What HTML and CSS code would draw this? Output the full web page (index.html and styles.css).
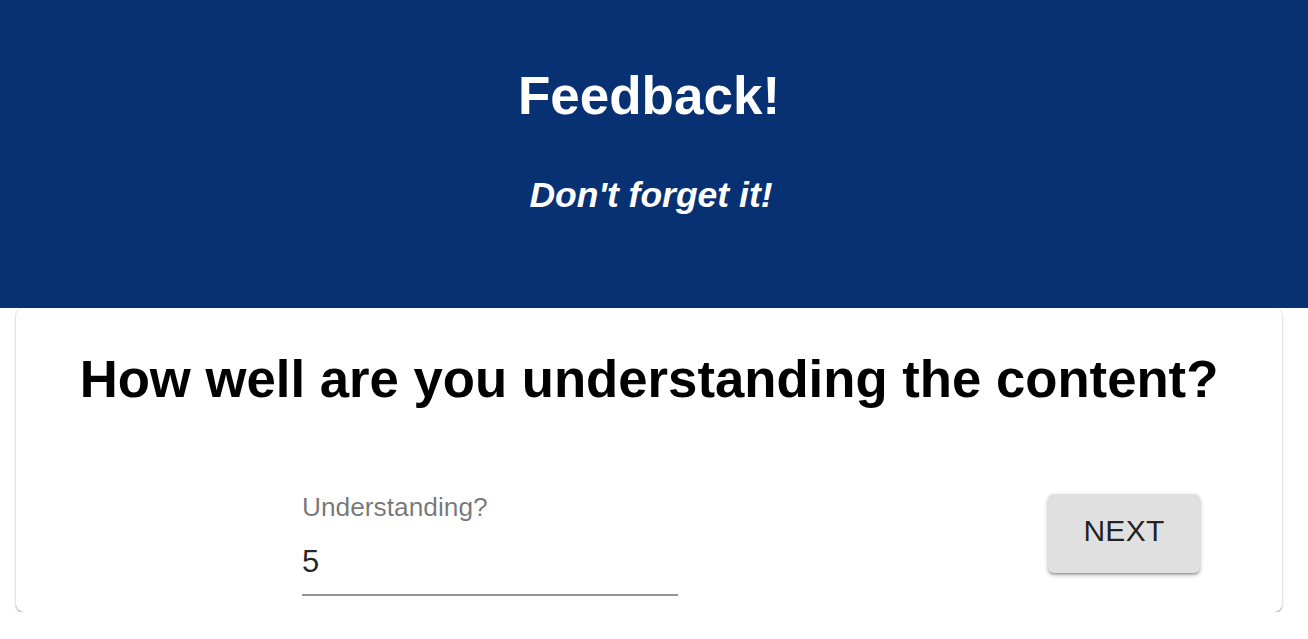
FILE: index.html
```html
<!DOCTYPE html>
<html lang="en">
<head>
<meta charset="utf-8">
<title>Feedback</title>
<link rel="stylesheet" href="styles.css">
</head>
<body>
<header class="hero">
  <h1 class="hero-title">Feedback!</h1>
  <h2 class="hero-sub">Don't forget it!</h2>
</header>
<main class="content">
  <section class="card">
    <h2 class="question">How well are you understanding the content?</h2>
    <div class="form-row">
      <div class="field">
        <label class="field-label" for="understanding">Understanding?</label>
        <input class="field-input" id="understanding" type="text" value="5">
      </div>
      <button class="next-btn" type="button">NEXT</button>
    </div>
  </section>
</main>
</body>
</html>
```

FILE: styles.css
```css
* { box-sizing: border-box; }

html, body {
  margin: 0;
  padding: 0;
  background: #ffffff;
  font-family: "Liberation Sans", Arial, Helvetica, sans-serif;
}

.hero {
  height: 308px;
  background: #083174;
  color: #ffffff;
  text-align: center;
  padding: 66px 10px 0 0;
}

.hero-title {
  margin: 0;
  font-size: 53px;
  line-height: 60px;
  font-weight: 700;
}

.hero-sub {
  margin: 49px 0 0;
  padding-left: 4px;
  font-size: 35.5px;
  line-height: 40px;
  font-weight: 700;
  font-style: italic;
}

.content {
  padding: 0 26px 0 16px;
}

.card {
  height: 304px;
  background: #ffffff;
  border-radius: 8px;
  box-shadow: 0 1px 3px rgba(0, 0, 0, 0.25), 0 1px 1px rgba(0, 0, 0, 0.16), 0 2px 1px -1px rgba(0, 0, 0, 0.14);
  padding-top: 41px;
}

.question {
  margin: 0;
  text-align: center;
  font-size: 52.7px;
  line-height: 60px;
  font-weight: 700;
  color: #000000;
}

.form-row {
  margin-top: 83px;
  display: flex;
  justify-content: space-between;
  align-items: flex-start;
  padding: 0 82px 0 286px;
}

.field {
  width: 376px;
  display: flex;
  flex-direction: column;
}

.field-label {
  font-size: 26.3px;
  line-height: 30px;
  color: rgba(0, 0, 0, 0.54);
}

.field-input {
  margin-top: 18px;
  padding: 3px 0 13px;
  border: none;
  border-bottom: 2px solid #949494;
  outline: none;
  background: transparent;
  font-family: inherit;
  font-size: 31px;
  line-height: 38px;
  height: 56px;
  color: rgba(0, 0, 0, 0.87);
  width: 100%;
}

.next-btn {
  margin-top: 2px;
  width: 152px;
  height: 79px;
  padding: 0 0 5px;
  border: none;
  border-radius: 6px;
  background: #e0e0e0;
  color: rgba(0, 0, 0, 0.87);
  font-family: inherit;
  font-size: 30px;
  line-height: 74px;
  letter-spacing: 0.3px;
  box-shadow: 0 2px 5px rgba(0, 0, 0, 0.24), 0 2px 2px rgba(0, 0, 0, 0.14), 0 3px 1px -2px rgba(0, 0, 0, 0.12);
  cursor: pointer;
}
```
